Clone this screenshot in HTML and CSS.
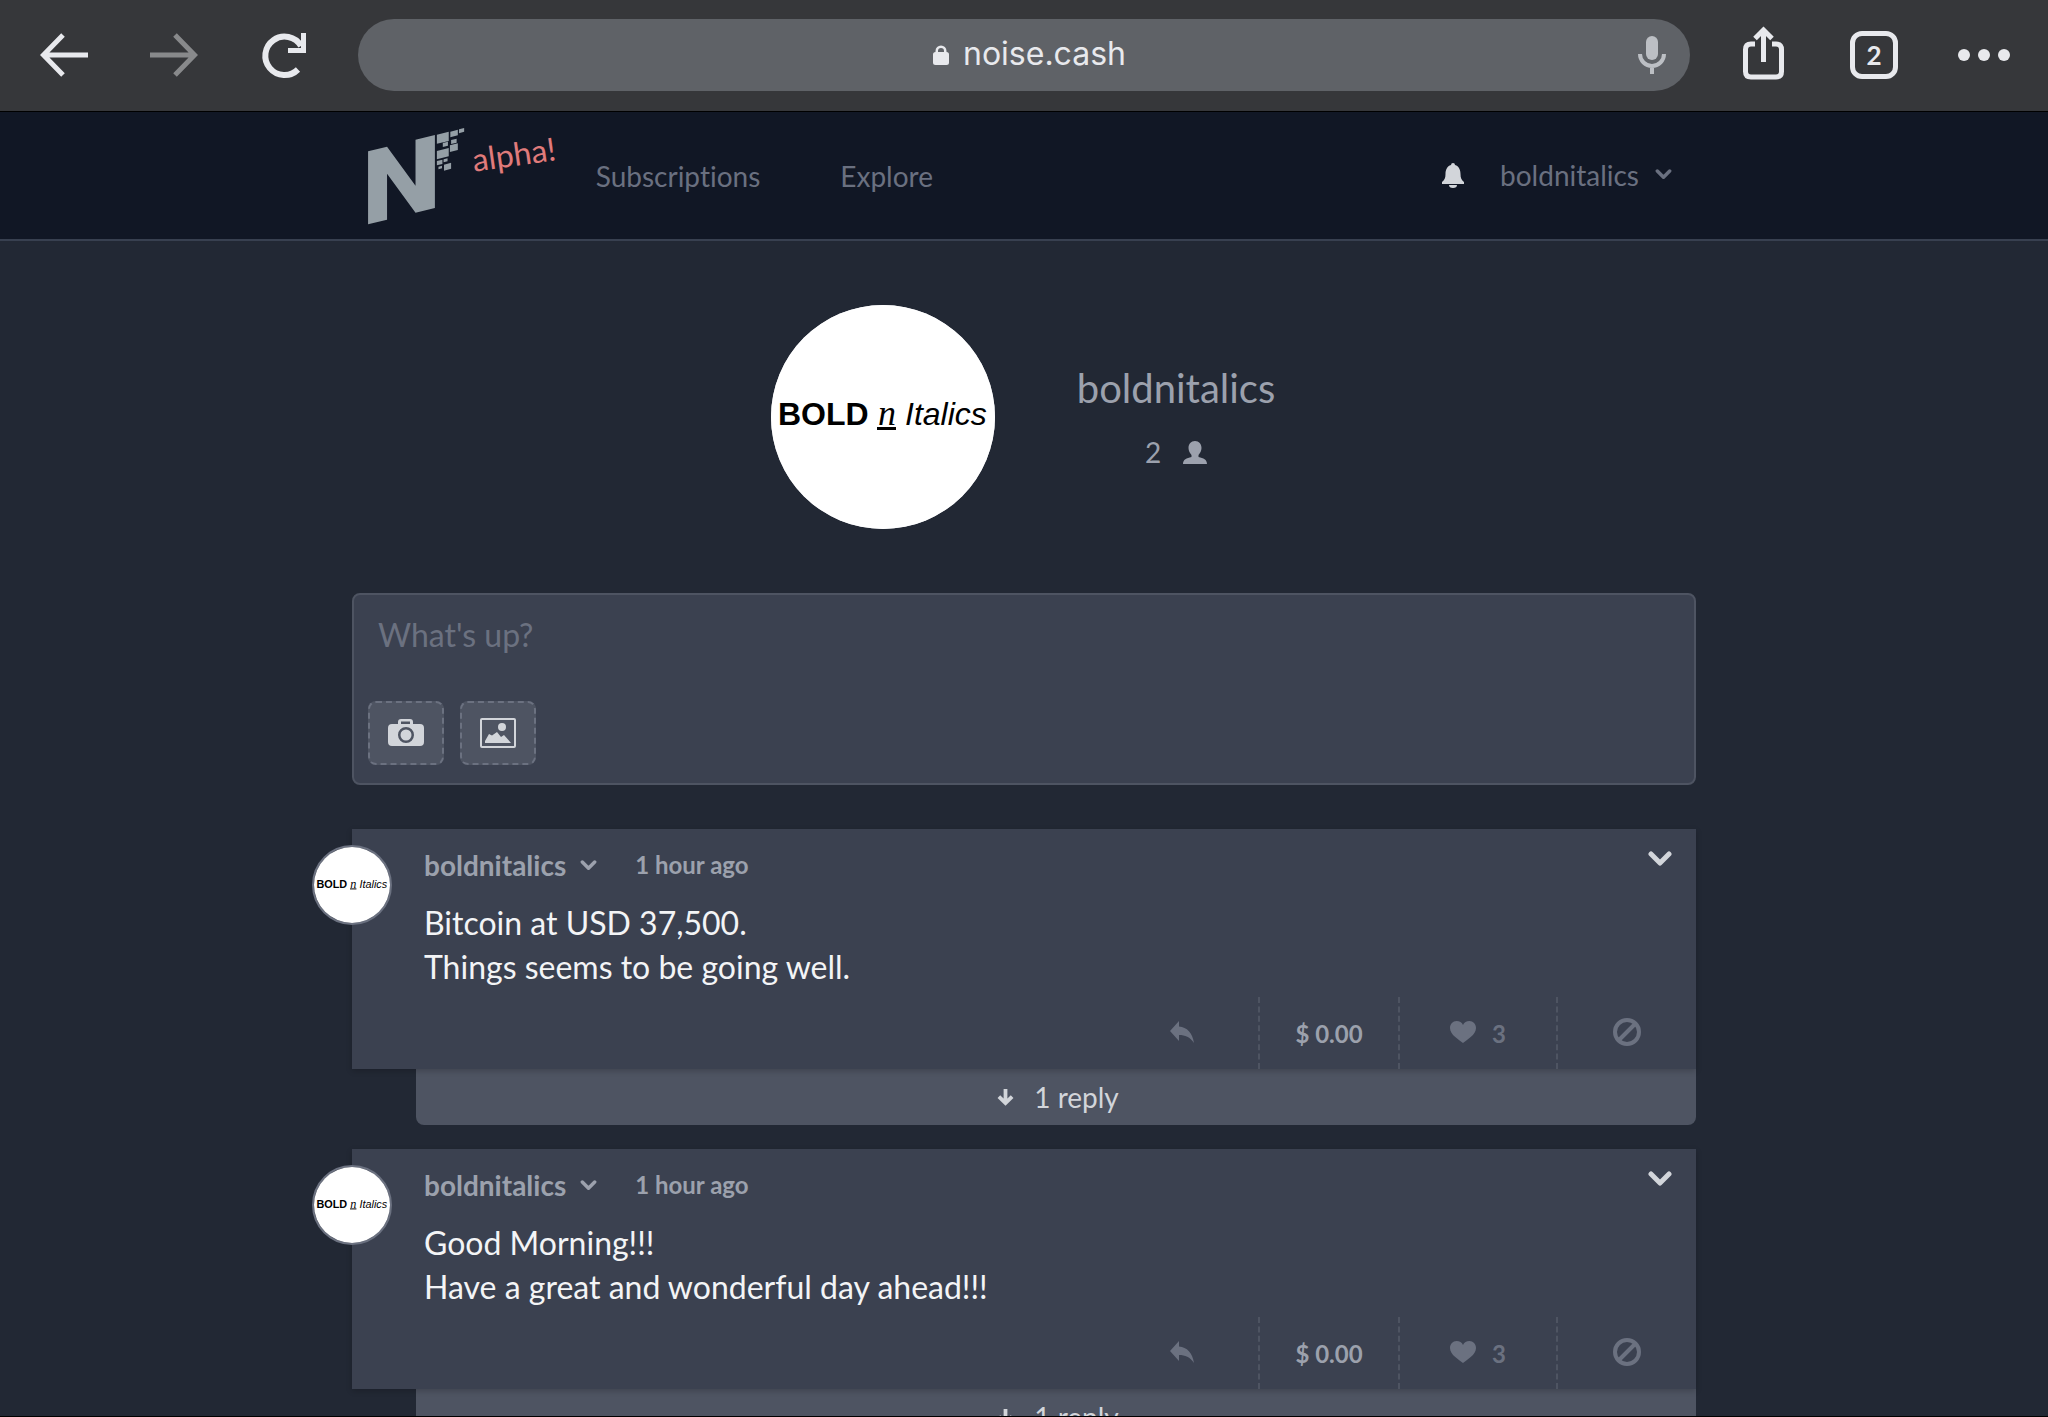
FILE: index.html
```html
<!DOCTYPE html>
<html lang="en">
<head>
<meta charset="utf-8">
<title>boldnitalics - noise.cash</title>
<link rel="stylesheet" href="styles.css">
</head>
<body>
<svg class="defs" aria-hidden="true">
  <symbol id="chevron" viewBox="0 0 24 16"><path d="M3 3l9 9 9-9" fill="none" stroke="currentColor" stroke-width="5" stroke-linecap="round" stroke-linejoin="round"/></symbol>
  <symbol id="reply" viewBox="0 0 24 22"><path fill="currentColor" d="M9 0v5.500C17 6 22.500 12 24 22 20 16 15 14 9 14v6L0 10z"/></symbol>
  <symbol id="heart" viewBox="0 0 26 22"><path fill="currentColor" d="M13 22C9 18.500 0 14 0 7 0 3 3 0 6.500 0 9.500 0 12 1.500 13 4c1-2.500 3.500-4 6.500-4C23 0 26 3 26 7c0 7-9 11.500-13 15z"/></symbol>
  <symbol id="ban" viewBox="0 0 28 28"><path fill="none" stroke="currentColor" stroke-width="4" d="M14 2a12 12 0 1 0 0 24 12 12 0 0 0 0-24zM22 6L6 22"/></symbol>
  <symbol id="down" viewBox="0 0 18 18"><path fill="none" stroke="currentColor" stroke-width="4" d="M9 0v14M2 8l7 7 7-7"/></symbol>
  <symbol id="avatar" viewBox="0 0 224 224">
    <circle cx="112" cy="112" r="112" fill="#fff"/>
    <text x="7" y="120" font-size="32" font-weight="700" font-family="Liberation Sans, Arial, sans-serif">BOLD</text>
    <text x="107" y="120" font-size="36" font-style="italic" font-family="Liberation Serif, Times New Roman, serif">n</text>
    <path d="M106 122h19v3h-19z"/>
    <text x="134" y="120" font-size="32" font-style="italic" font-family="Liberation Sans, Arial, sans-serif">Italics</text>
  </symbol>
</svg>

<div class="toolbar">
  <button class="tool" aria-label="Back"><svg viewBox="0 0 48 48"><path class="line" d="M48 24H4M23 4L3.500 24 23 44"/></svg></button>
  <button class="tool dim" aria-label="Forward"><svg viewBox="0 0 48 48"><path class="line" d="M0 24h44M25 4l19.500 20L25 44"/></svg></button>
  <button class="tool" aria-label="Reload"><svg viewBox="0 0 48 48"><path class="line thick" d="M38 38.500A19.200 19.200 0 1 1 41 15"/><path class="line" d="M43.500 2v17.500H28"/></svg></button>
  <div class="address">
    <span></span>
    <label class="url"><svg viewBox="0 0 16 20"><path fill="currentColor" d="M0 9.500Q0 7 2.500 7V6a5.500 5.500 0 0 1 11 0v1Q16 7 16 9.500v8q0 2.500-2.500 2.500h-11Q0 20 0 17.500zM5 7h6V6a3 3 0 0 0-6 0z"/></svg><input type="text" value="noise.cash" aria-label="Address"></label>
    <button class="mic" aria-label="Voice search"><svg viewBox="0 0 28 38"><rect x="8" width="12" height="24" rx="6" fill="currentColor"/><path d="M2 18a12 12 0 0 0 24 0M14 30v8" fill="none" stroke="currentColor" stroke-width="4"/></svg></button>
  </div>
  <button class="tool" aria-label="Share"><svg viewBox="0 0 48 48"><path class="line" d="M15 13h-4q-5.500 0-5.500 5.500v22q0 5.500 5.500 5.500h25q5.500 0 5.500-5.500v-22q0-5.500-5.500-5.500h-4M23.500 31V0M15 7.500L23.500-1 32 7.500"/></svg></button>
  <button class="tool tabs" aria-label="Open tabs">2</button>
  <button class="tool" aria-label="More"><svg viewBox="0 0 48 48" fill="currentColor"><circle cx="4" cy="24" r="6"/><circle cx="24" cy="24" r="6"/><circle cx="44" cy="24" r="6"/></svg></button>
</div>

<header class="site">
  <div class="wrap bar">
    <a class="logo" href="#" aria-label="noise.cash home">
      <svg viewBox="0 0 96 96" fill="currentColor"><g transform="translate(-28 -27) scale(.3954 .3333)">
        <path d="M71 151l48-14 72 117V116l49-14v219l-49 14-72-117v138l-48 14z"/>
        <path d="M245 101l30-9v28l-30 8zM279 92l19-6v17l-19 6zM301 85l13-4v11l-13 5zM260 126l13-4v12l-13 4zM281 117l14-4v12l-14 4zM278 133l20-6v20l-20 6zM245 150l30-9v25l-30 9zM245 180l14-4v13l-14 4zM262 175l10-3v9l-10 3zM249 197l9-3v8l-9 3zM263 191l18-6v18l-18 6z"/>
      </g></svg>
      <span class="alpha">alpha!</span>
    </a>
    <nav>
      <a href="#">Subscriptions</a>
      <a href="#">Explore</a>
    </nav>
    <button class="bell" aria-label="Notifications"><svg viewBox="0 0 22 25"><path fill="currentColor" d="M9 2q0-2 2-2t2 2c4 1 5.500 5 5.500 9 0 4 1 6 3.500 8v2H0v-2c2.500-2 3.500-4 3.500-8C3.500 7 5 3 9 2zM7 22h8q0 3-4 3t-4-3z"/></svg></button>
    <button class="account">boldnitalics<svg class="chev"><use href="#chevron"/></svg></button>
  </div>
</header>

<main class="wrap">
  <section class="profile">
    <svg class="portrait" role="img" aria-label="BOLD n Italics"><use href="#avatar"/></svg>
    <div class="who">
      <h1>boldnitalics</h1>
      <p>2<svg viewBox="0 0 24 23"><path fill="currentColor" d="M12 0c4 0 6.500 3 6.500 7 0 3-1.500 5-3 7v2c5 1 8.500 2.500 8.500 7H0c0-4.500 3.500-6 8.500-7v-2c-1.500-2-3-4-3-7 0-4 2.500-7 6.500-7z"/></svg></p>
    </div>
  </section>

  <form class="composer">
    <textarea placeholder="What's up?" aria-label="What's up?"></textarea>
    <div class="attach">
      <button type="button" aria-label="Take photo"><svg viewBox="0 0 36 30"><path fill="currentColor" fill-rule="evenodd" d="M10 6V4q0-3 3-3h9q3 0 3 3v2h7q4 0 4 4v14q0 4-4 4H4q-4 0-4-4V10q0-4 4-4zM13 6h9V3.500h-9zM18 9a8 8 0 1 0 0 16 8 8 0 0 0 0-16zM18 11.500a5.500 5.500 0 1 1 0 11 5.500 5.500 0 0 1 0-11z"/></svg></button>
      <button type="button" aria-label="Add image"><svg viewBox="0 0 36 30"><rect x="1" y="1" width="34" height="28" rx="1" fill="none" stroke="currentColor" stroke-width="2"/><circle cx="22" cy="9" r="4" fill="currentColor"/><path fill="currentColor" d="M5 25v-2l4-7 3 1.500 5-3.500 4 5 3-2 7 8z"/></svg></button>
    </div>
  </form>

  <article class="post">
    <div class="card">
      <svg class="face" role="img" aria-label="BOLD n Italics"><use href="#avatar"/></svg>
      <div class="head"><button class="author">boldnitalics<svg class="chev"><use href="#chevron"/></svg></button><time>1 hour ago</time><button class="more" aria-label="Post menu"><svg><use href="#chevron"/></svg></button></div>
      <p class="text">Bitcoin at USD 37,500.<br>Things seems to be going well.</p>
      <div class="actions">
        <button class="act" aria-label="Reply"><svg class="i-reply"><use href="#reply"/></svg></button>
        <span class="act money">$ 0.00</span>
        <button class="act wide"><svg class="i-heart"><use href="#heart"/></svg>3</button>
        <button class="act" aria-label="Block"><svg class="i-ban"><use href="#ban"/></svg></button>
      </div>
    </div>
    <button class="replies"><svg><use href="#down"/></svg>1 reply</button>
  </article>

  <article class="post">
    <div class="card">
      <svg class="face" role="img" aria-label="BOLD n Italics"><use href="#avatar"/></svg>
      <div class="head"><button class="author">boldnitalics<svg class="chev"><use href="#chevron"/></svg></button><time>1 hour ago</time><button class="more" aria-label="Post menu"><svg><use href="#chevron"/></svg></button></div>
      <p class="text">Good Morning!!!<br>Have a great and wonderful day ahead!!!</p>
      <div class="actions">
        <button class="act" aria-label="Reply"><svg class="i-reply"><use href="#reply"/></svg></button>
        <span class="act money">$ 0.00</span>
        <button class="act wide"><svg class="i-heart"><use href="#heart"/></svg>3</button>
        <button class="act" aria-label="Block"><svg class="i-ban"><use href="#ban"/></svg></button>
      </div>
    </div>
    <button class="replies"><svg><use href="#down"/></svg>1 reply</button>
  </article>
</main>
</body>
</html>
```
FILE: styles.css
```css
* { box-sizing: border-box; }
body {
  margin: 0;
  height: 100vh;
  overflow: hidden;
  display: flex;
  flex-direction: column;
  background: #222834;
  border-bottom: 1px solid #000;
  color: #9ca1ad;
  font: 28px/40px Lato, sans-serif;
  font-variant-ligatures: none;
}
h1, p { margin: 0; font-weight: 400; }
button, input, textarea { font: inherit; font-variant-ligatures: none; color: inherit; background: none; border: 0; padding: 0; margin: 0; }
button { display: flex; align-items: center; justify-content: center; }
a { color: inherit; text-decoration: none; }
svg { display: block; flex: none; overflow: visible; }
.defs { width: 0; height: 0; position: absolute; }

/* browser toolbar */
.toolbar {
  flex: none;
  display: flex;
  align-items: center;
  gap: 62px;
  height: 112px;
  padding: 0 40px 2px;
  background: #36373a;
  border-bottom: 1px solid #000;
  color: #e8e9ed;
}
.tool, .tool svg { width: 48px; height: 48px; flex: none; }
.tool.dim { color: #88898b; }
.line { fill: none; stroke: currentColor; stroke-width: 5; }
.thick { stroke-width: 6; }
.tabs { border: 5px solid; border-radius: 12px; font: 700 26px/38px Lato, sans-serif; }
.address {
  flex: 1;
  display: grid;
  grid-template-columns: 28px 1fr 28px;
  align-items: center;
  height: 72px;
  margin: 0 -12px;
  padding: 0 24px 0 36px;
  border-radius: 36px;
  background: #5f6267;
}
.url { display: flex; align-items: center; justify-content: center; gap: 14px; }
.url svg { width: 16px; height: 20px; }
.url input { width: 164px; padding-bottom: 2px; font: 32px/40px Inter, sans-serif; }
.mic { color: #bcbfc4; }
.mic svg { width: 28px; height: 38px; }

/* site header */
.wrap { width: 100%; max-width: 1344px; margin: 0 auto; }
.site { flex: none; background: #111725; border-bottom: 2px solid #384050; color: #6a7080; }
.bar { display: flex; align-items: center; height: 127px; padding: 0 24px 0 16px; }
.logo { display: flex; align-items: flex-start; gap: 8px; color: #959fa6; }
.logo svg { width: 96px; height: 96px; }
.alpha { margin-top: 6px; font-size: 32px; color: #e07b7b; transform: rotate(-8deg); }
nav { display: flex; gap: 80px; margin: 0 auto 0 40px; }
.bell { color: #d2d5da; margin-right: 36px; }
.bell svg { width: 22px; height: 25px; }
.account { gap: 16px; padding-bottom: 2px; }
.chev { width: 17px; height: 11px; }

/* profile */
.profile { display: flex; justify-content: center; align-items: center; gap: 80px; padding: 64px 0; }
.portrait { width: 224px; height: 224px; border-radius: 50%; box-shadow: inset 0 0 0 2px #e2e4e9; }
.who { min-width: 202px; padding-top: 6px; text-align: center; line-height: 64px; }
.who h1 { font-size: 40px; }
.who p { display: flex; align-items: center; justify-content: center; gap: 22px; }
.who svg { width: 24px; height: 23px; }

/* composer */
.composer { border: 2px solid #4e5462; border-radius: 8px; background: #3b4150; margin-bottom: 44px; }
.composer textarea { display: block; width: 100%; height: 106px; padding: 18px 24px; font-size: 32px; line-height: 44px; resize: none; outline: 0; }
.composer textarea::placeholder { color: #6b7180; opacity: 1; }
.attach { display: flex; gap: 16px; padding: 0 14px 18px; }
.attach button { width: 76px; height: 64px; border: 2px dashed #6b7180; border-radius: 8px; background: #4e5462; color: #d2d5da; }
.attach svg { width: 36px; height: 30px; }

/* posts */
.post { margin-bottom: 24px; }
.card { position: relative; padding: 16px 0 0 72px; background: #3b4150; box-shadow: 0 2px 6px rgba(0, 0, 0, .2); }
.face { position: absolute; left: -40px; top: 16px; width: 80px; height: 80px; border: 2px solid #6b7180; border-radius: 50%; }
.head { display: flex; align-items: center; font-weight: 700; padding-right: 24px; }
.author { gap: 14px; }
.head time { margin-left: 38px; font-size: 24px; }
.more { margin: -12px 0 0 auto; color: #d2d5da; }
.more svg { width: 24px; height: 16px; }
.text { margin: 16px 0 8px; font-size: 32px; line-height: 44px; color: #f3f4f6; }
.actions { display: flex; justify-content: flex-end; height: 72px; color: #6b7180; font-size: 24px; font-weight: 700; }
.act { display: flex; align-items: center; justify-content: center; width: 140px; gap: 16px; padding-top: 2px; }
.act:first-child { width: 152px; }
.act + .act { border-left: 2px dashed #4e5462; }
.act.wide { width: 158px; }
.act svg { margin-bottom: 4px; }
.money { color: #9ca1ad; }
.i-reply { width: 24px; height: 22px; }
.i-heart { width: 26px; height: 22px; }
.i-ban { width: 28px; height: 28px; }
.replies { width: calc(100% - 64px); height: 56px; margin-left: 64px; padding-left: 4px; gap: 20px; border-radius: 0 0 8px 8px; background: #4e5462; color: #d2d5da; }
.replies svg { width: 17px; height: 17px; }
```
